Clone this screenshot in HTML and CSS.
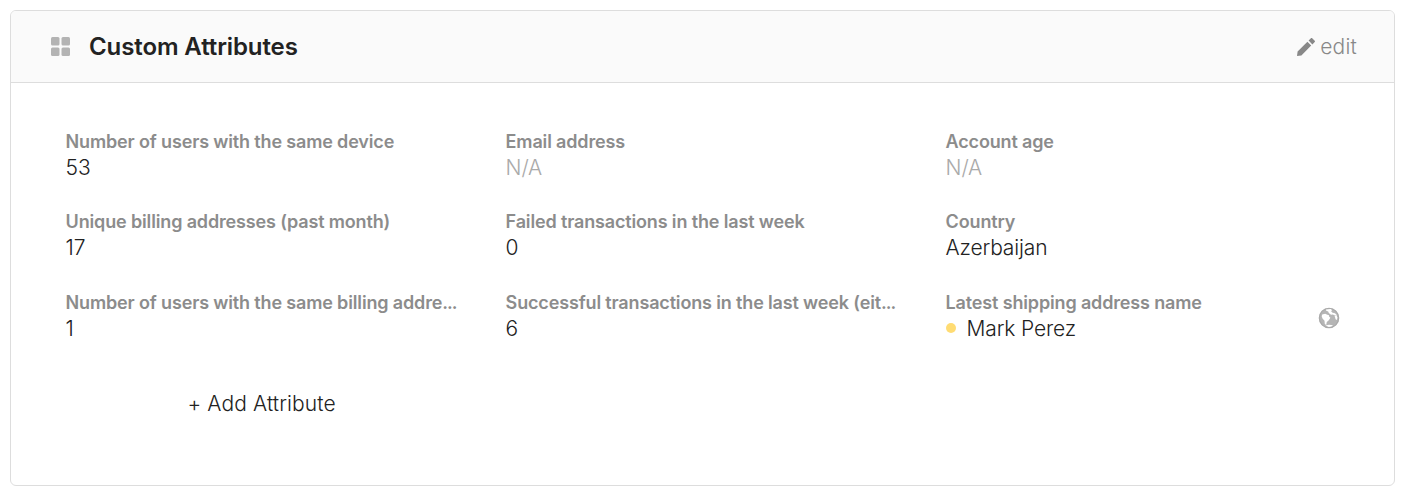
FILE: index.html
```html
<!DOCTYPE html>
<html lang="en">
<head>
    <meta charset="UTF-8">
    <meta name="viewport" content="width=device-width, initial-scale=1.0">
    <title>Custom Attributes</title>
    <link rel="stylesheet" href="styles.css">
</head>
<body>

    <div class="card">
        <div class="card-header">
            <svg class="grid-icon" width="19" height="19" viewBox="0 0 19 19">
                <rect x="0" y="0" width="8.5" height="8.5" rx="1.5"/>
                <rect x="10.5" y="0" width="8.5" height="8.5" rx="1.5"/>
                <rect x="0" y="10.5" width="8.5" height="8.5" rx="1.5"/>
                <rect x="10.5" y="10.5" width="8.5" height="8.5" rx="1.5"/>
            </svg>
            <h2>Custom Attributes</h2>
            <a class="edit" href="#">
                <svg width="18" height="18" viewBox="0 0 18 18">
                    <path d="M0 18l.6-4.4L10.4 3.8l3.8 3.8L4.4 17.4zM17.7 4.1c.4-.4.4-.9 0-1.3L15.2.3c-.4-.4-.9-.4-1.3 0L11.6 2.6l3.8 3.8z"/>
                </svg>
                edit
            </a>
        </div>

        <div class="card-body">
            <div class="attributes">
                <div class="attribute">
                    <div class="label">Number of users with the same device</div>
                    <div class="value">53</div>
                </div>
                <div class="attribute">
                    <div class="label">Email address</div>
                    <div class="value empty">N/A</div>
                </div>
                <div class="attribute">
                    <div class="label">Account age</div>
                    <div class="value empty">N/A</div>
                </div>
                <div class="attribute">
                    <div class="label">Unique billing addresses (past month)</div>
                    <div class="value">17</div>
                </div>
                <div class="attribute">
                    <div class="label">Failed transactions in the last week</div>
                    <div class="value">0</div>
                </div>
                <div class="attribute">
                    <div class="label">Country</div>
                    <div class="value">Azerbaijan</div>
                </div>
                <div class="attribute">
                    <div class="label">Number of users with the same billing addre<span class="more">...</span></div>
                    <div class="value">1</div>
                </div>
                <div class="attribute">
                    <div class="label">Successful transactions in the last week (eit<span class="more">...</span></div>
                    <div class="value">6</div>
                </div>
                <div class="attribute with-icon">
                    <div>
                        <div class="label">Latest shipping address name</div>
                        <div class="value"><span class="dot"></span>Mark Perez</div>
                    </div>
                    <svg class="globe" width="22" height="22" viewBox="0 0 22 22">
                        <circle class="sea" cx="11" cy="11" r="10"/>
                        <circle class="rim" cx="11" cy="11" r="9.7"/>
                        <path class="land" d="M4.2 7.6l3-.8 2.2 1 1.6.4.2 1.5 1.2 1-1.6 2.6-2 1.6-.6 3.2-1.4-1-.3-3.4-2-2.2-.8-2.2z"/>
                        <path class="land" d="M8 2.4l4.6-.4 1.4 1-.8 1.4 1.4 1.3 2.4.5 1.6 1.8-1.6.4-2.2-.8-1.8.2-2.2-1.8-.6-1.6-2-.6z"/>
                        <path class="land" d="M18.2 7.4l1.2 3-.4 2.6-1.4-.8-.8-2.6z"/>
                        <path class="land" d="M7.4 18.6l3.6-.8 4 .4-1.6 1.2-2.6.5z"/>
                    </svg>
                </div>
            </div>
            <button class="add" type="button">+ Add Attribute</button>
        </div>
    </div>

</body>
</html>
```

FILE: styles.css
```css
* {
    box-sizing: border-box;
}

body {
    font-family: Inter, sans-serif;
    font-size: 21px;
    color: #222;
    background-color: #fff;
    margin: 0;
    padding: 10px 8px 10px 10px;
}

.card {
    height: 476px;
    border: 1px solid #ddd;
    border-radius: 6px;
    overflow: hidden;
}

.card-header {
    display: flex;
    align-items: center;
    height: 72px;
    padding: 0 37px 0 40px;
    background-color: #fafafa;
    border-bottom: 1px solid #ddd;
}

.card-header h2 {
    margin: 0 auto 0 19px;
    font-size: 24px;
    font-weight: 600;
    letter-spacing: -0.1px;
}

.grid-icon {
    fill: #b3b3b3;
}

.edit {
    display: flex;
    align-items: center;
    gap: 5px;
    color: #888;
    font-size: 21px;
    font-weight: 300;
    letter-spacing: 0.2px;
    text-decoration: none;
}

.edit svg {
    fill: #888;
}

.card-body {
    padding: 46px 36px 0 54.6px;
}

.attributes {
    display: grid;
    grid-template-columns: 392px 392px 1fr;
    grid-template-rows: 80px 81px 80px;
    column-gap: 48px;
}

.label {
    color: #8c8c8c;
    font-size: 18px;
    font-weight: 600;
    letter-spacing: -0.15px;
    line-height: 26px;
    white-space: nowrap;
}

.more {
    letter-spacing: -1px;
}

.value {
    font-size: 21px;
    font-weight: 300;
    letter-spacing: -0.15px;
    line-height: 26px;
}

.empty {
    color: #aaa;
}

.with-icon {
    display: flex;
    justify-content: space-between;
}

.dot {
    display: inline-block;
    width: 10px;
    height: 10px;
    margin-right: 11px;
    border-radius: 50%;
    background-color: #ffdc73;
    vertical-align: 3px;
}

.globe {
    margin: 17px 18px 0 0;
}

.globe .sea {
    fill: #b5b5b5;
}

.globe .rim {
    fill: none;
    stroke: #aaa;
    stroke-width: 1.2;
}

.globe .land {
    fill: #fff;
}

.add {
    display: block;
    width: 392px;
    margin-top: 20px;
    padding: 0;
    border: none;
    background: none;
    color: #222;
    font-family: inherit;
    font-size: 21px;
    font-weight: 300;
    letter-spacing: 0.1px;
    line-height: 28px;
    cursor: pointer;
}
```
